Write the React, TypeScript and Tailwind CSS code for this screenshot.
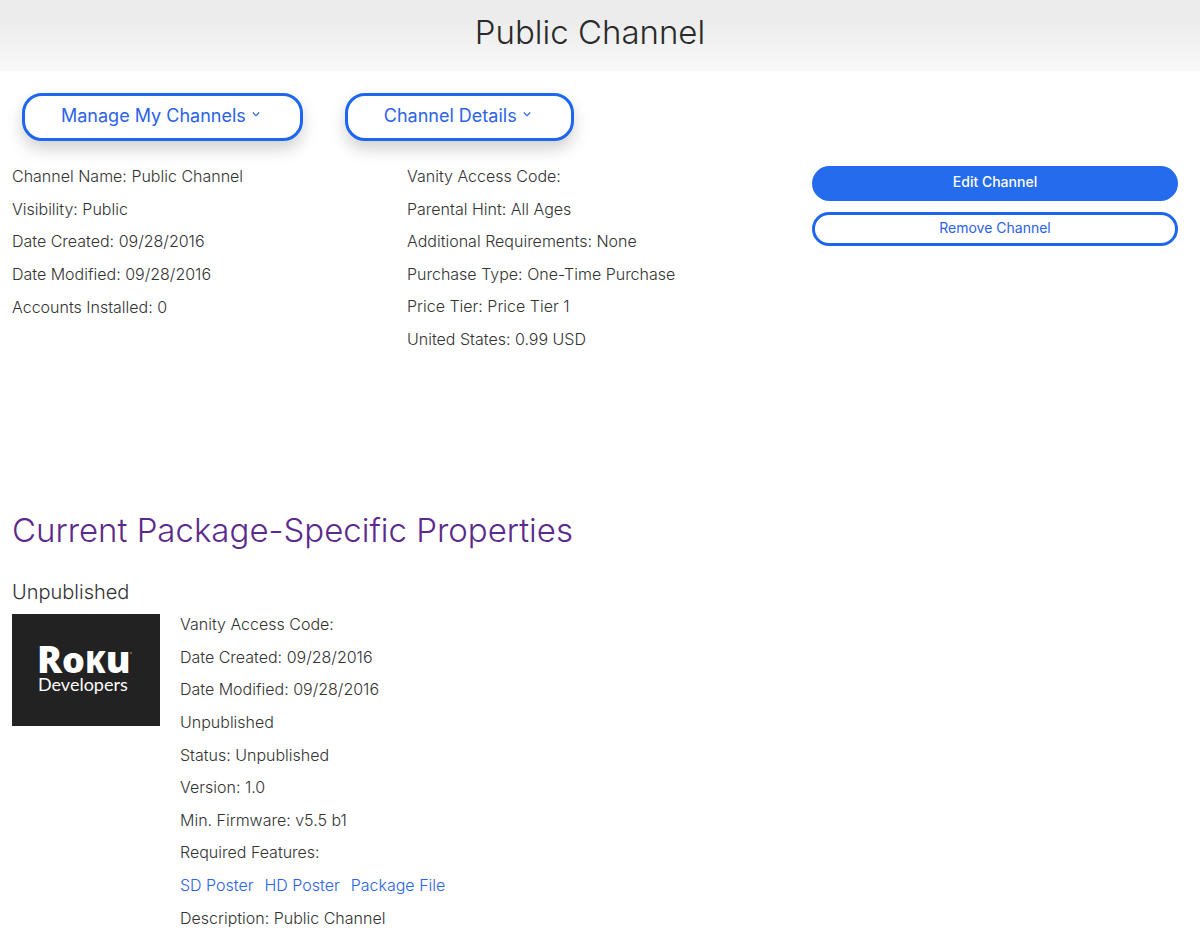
import React from "react";

const channelFacts = [
  "Channel Name: Public Channel",
  "Visibility: Public",
  "Date Created: 09/28/2016",
  "Date Modified: 09/28/2016",
  "Accounts Installed: 0",
];

const accessFacts = [
  "Vanity Access Code:",
  "Parental Hint: All Ages",
  "Additional Requirements: None",
  "Purchase Type: One-Time Purchase",
  "Price Tier: Price Tier 1",
  "United States: 0.99 USD",
];

const packageFacts = [
  "Vanity Access Code:",
  "Date Created: 09/28/2016",
  "Date Modified: 09/28/2016",
  "Unpublished",
  "Status: Unpublished",
  "Version: 1.0",
  "Min. Firmware: v5.5 b1",
  "Required Features:",
];

const packageLinks = ["SD Poster", "HD Poster", "Package File"];

function MenuButton({ label }: { label: string }) {
  return (
    <button
      type="button"
      className="flex h-12 items-center gap-[6px] rounded-[20px] border-3 border-[#1d66f0] bg-white pr-10 pb-1 pl-9 text-[18px] font-normal text-[#2b63ea] shadow-[0_8px_16px_rgba(0,0,0,0.18)]"
    >
      <span>{label}</span>
      <svg aria-hidden="true" viewBox="0 0 8 8" className="size-2" fill="none" stroke="currentColor" strokeWidth="1.1">
        <path d="M0.8 1.5 4 4.7 7.2 1.5" />
      </svg>
    </button>
  );
}

function PosterLogo() {
  return (
    <div className="h-28 w-37 shrink-0 bg-[#222]">
      <svg viewBox="0 0 148 112" className="block size-full" fill="#fff">
        <text x="25" y="59" className="font-['Open_Sans'] font-extrabold">
          <tspan fontSize="37">R</tspan>
          <tspan fontSize="36">o</tspan>
          <tspan fontSize="30">K</tspan>
          <tspan fontSize="37">u</tspan>
        </text>
        <text x="26" y="77" fontSize="18" className="font-[Lato] font-normal">
          Developers
        </text>
        <circle cx="119" cy="39" r="0.8" fill="#aaa" />
      </svg>
    </div>
  );
}

export default function App() {
  return (
    <div className="min-h-screen bg-white font-[Inter,sans-serif] text-[16px] font-light text-[#333]">
      <header className="bg-linear-to-b from-[#ececec] from-30% to-[#f9f9f9] pt-3 pr-5 pb-[19px]">
        <h1 className="text-center text-[33px] leading-10 font-light text-[#2a2a2a]">Public Channel</h1>
      </header>

      <main className="px-3">
        <nav className="flex gap-[42px] px-[10px] pt-[22px]">
          <MenuButton label="Manage My Channels" />
          <MenuButton label="Channel Details" />
        </nav>

        <section className="grid min-h-[360px] grid-cols-[395fr_395fr_386fr] items-start pt-[19px]">
          <ul className="grid min-h-[163px] auto-rows-fr items-center">
            {channelFacts.map((fact) => (
              <li key={fact}>{fact}</li>
            ))}
          </ul>
          <ul className="grid min-h-[195px] auto-rows-fr items-center">
            {accessFacts.map((fact) => (
              <li key={fact}>{fact}</li>
            ))}
          </ul>
          <div className="flex flex-col gap-[11px] pt-[6px] pr-[10px] pl-[10px] text-[14px]">
            <button type="button" className="h-[35px] rounded-full bg-[#246bee] pb-1 font-medium text-white">
              Edit Channel
            </button>
            <button type="button" className="h-[34px] rounded-full border-3 border-[#1d66f0] bg-white pb-1 font-normal text-[#2b63ea]">
              Remove Channel
            </button>
          </div>
        </section>

        <section className="pt-[7px]">
          <h2 className="text-[33px] leading-[44px] font-light text-[#5b2a8c]">Current Package-Specific Properties</h2>
          <h3 className="pt-6 text-[20px] leading-8 font-light">Unpublished</h3>
          <div className="flex items-start gap-5 pt-[6px]">
            <PosterLogo />
            <ul className="-mt-[6px] grid min-h-[326px] auto-rows-fr items-center">
              {packageFacts.map((fact) => (
                <li key={fact}>{fact}</li>
              ))}
              <li className="flex gap-[11px]">
                {packageLinks.map((link) => (
                  <a key={link} href="#" className="text-[#2b63ea]">
                    {link}
                  </a>
                ))}
              </li>
              <li>Description: Public Channel</li>
            </ul>
          </div>
        </section>
      </main>
    </div>
  );
}
